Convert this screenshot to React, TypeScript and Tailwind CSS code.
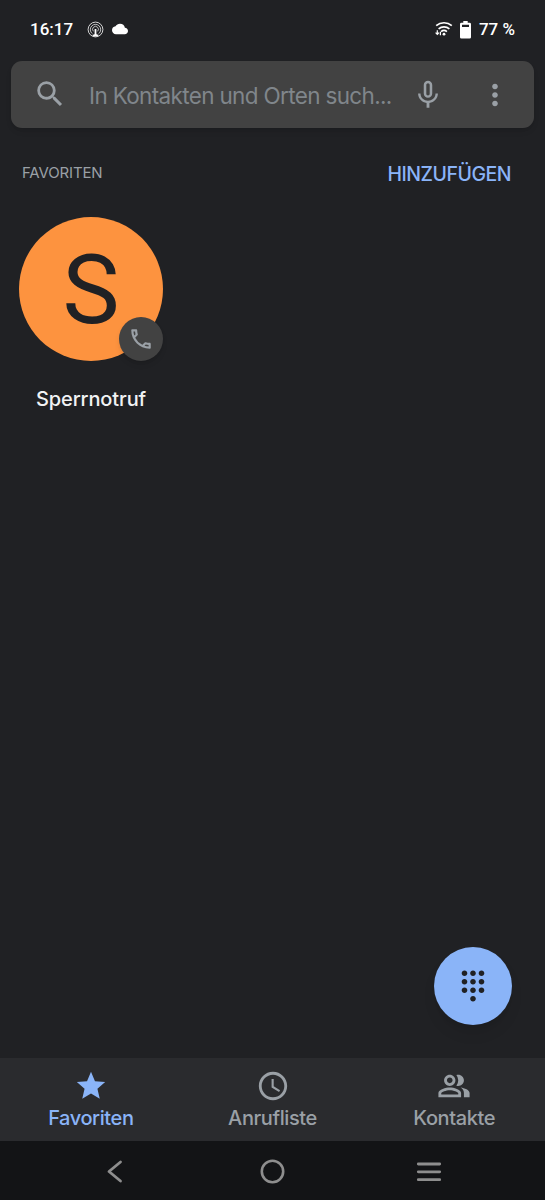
import type { ReactNode } from 'react'
import {
  MdAccessTime,
  MdCloud,
  MdDialpad,
  MdMicNone,
  MdMoreVert,
  MdOutlineCall,
  MdOutlinePeopleAlt,
  MdSearch,
  MdStar,
} from 'react-icons/md'
import clsx from 'clsx'

const HotspotIcon = () => (
  <svg width="17" height="17" viewBox="0 0 17 17" fill="none" stroke="currentColor">
    <circle cx="8.5" cy="8.5" r="7.4" strokeWidth="0.8" />
    <path d="M5.2 12.6A5.2 5.2 0 1 1 11.8 12.6" strokeWidth="0.7" />
    <path d="M6.4 10.3A2.9 2.9 0 1 1 10.6 10.3" strokeWidth="0.7" />
    <path d="M7.6 8h1.8v5.3l2.6.7q-3.5 3-7 0l2.6-.7z" fill="currentColor" stroke="none" />
  </svg>
)

const WifiIcon = () => (
  <svg width="18" height="16" viewBox="0 0 18 16" fill="none" stroke="currentColor" strokeWidth="1.7">
    <path d="M1.2 4.6C5.6.8 12.4.8 16.8 4.6" />
    <path d="M3.6 7.8C6.7 5.2 11.3 5.2 14.4 7.8" />
    <path d="M6.1 10.6C7.8 9.2 10.2 9.2 11.9 10.6" />
    <circle cx="9" cy="13.2" r="1.4" fill="currentColor" stroke="none" />
    <path d="M2.3 9.3v4M.6 11.6l1.7 1.8L4 11.6M5.4 14.2v-3.4" strokeWidth="1.2" />
  </svg>
)

const BatteryIcon = () => (
  <svg width="11" height="18" viewBox="0 0 11 18" fill="currentColor">
    <path
      fillRule="evenodd"
      d="M3.3 0h4.4v1.8h1.9Q11 1.8 11 3.2v13q0 1.4-1.4 1.4H1.4Q0 17.6 0 16.2v-13Q0 1.8 1.4 1.8h1.9zM2 3.7v2.3h7V3.7z"
    />
  </svg>
)

const StatusBar = () => (
  <div className="flex h-[61px] shrink-0 items-center px-[30px] pb-[2px] font-[Roboto,sans-serif] text-[17px] font-medium text-white">
    <span className="w-[43px] whitespace-nowrap">16:17</span>
    <div className="ml-[14px] flex items-center gap-[8px]">
      <HotspotIcon />
      <MdCloud size={16} className="-mt-[2px]" />
    </div>
    <div className="ml-auto flex items-center">
      <span className="-mt-px">
        <WifiIcon />
      </span>
      <span className="ml-[7px]">
        <BatteryIcon />
      </span>
      <span className="ml-[8px] whitespace-nowrap">77 %</span>
    </div>
  </div>
)

const SearchBar = () => (
  <div className="mx-[11px] flex h-[66.5px] shrink-0 items-center rounded-[11px] bg-[#424242] text-[#9aa0a6] shadow-md">
    <MdSearch size={34} className="ml-[22px] shrink-0" />
    <span className="ml-[22px] w-[317px] whitespace-nowrap pt-[3px] text-[22.5px] tracking-[-0.66px] text-[#80868b]">
      In Kontakten und Orten such...
    </span>
    <MdMicNone size={34} className="ml-[5px] mt-px shrink-0" />
    <MdMoreVert size={34} className="ml-auto mr-[22px] mt-px shrink-0" />
  </div>
)

interface IFavoriteProps {
  name: string
}

const Favorite = ({ name }: IFavoriteProps) => (
  <div className="flex w-[182px] flex-col items-center">
    <div className="relative flex size-[144px] items-center justify-center rounded-full bg-[#fd933f]">
      <span className="pt-[2px] font-[Roboto,sans-serif] text-[96px] leading-none text-[#202124]">
        {name.charAt(0)}
      </span>
      <span className="absolute bottom-0 right-0 flex size-[44px] items-center justify-center rounded-full bg-[#424242] text-[#9aa0a6] shadow-md">
        <MdOutlineCall size={26} />
      </span>
    </div>
    <span className="mt-[23px] text-[20px] font-medium leading-[30px] tracking-[-0.1px] text-[#f1f3f4]">
      {name}
    </span>
  </div>
)

interface ITabProps {
  icon: ReactNode
  label: string
  active?: boolean
}

const Tab = ({ icon, label, active }: ITabProps) => (
  <button
    className={clsx(
      'flex flex-1 flex-col items-center pt-[11px]',
      active ? 'text-[#8ab4f8]' : 'text-[#9aa0a6]',
    )}
  >
    {icon}
    <span className="text-[20px] font-medium leading-[30px] tracking-[-0.4px]">{label}</span>
  </button>
)

const SystemNav = () => (
  <div className="flex h-[59px] shrink-0 items-center bg-[#131416] pl-[107px] text-[#8e8e8e]">
    <svg width="16" height="24" viewBox="0 0 16 24" fill="none" stroke="currentColor" strokeWidth="2.8" strokeLinecap="round" strokeLinejoin="round">
      <path d="M13.5 3 2 12.5 13.5 22" />
    </svg>
    <svg width="26" height="26" viewBox="0 0 26 26" fill="none" stroke="currentColor" strokeWidth="2.6" className="ml-[137px]">
      <circle cx="12.5" cy="13.5" r="10.7" />
    </svg>
    <svg width="26" height="24" viewBox="0 0 26 24" stroke="currentColor" strokeWidth="2.8" strokeLinecap="round" className="ml-[130px]">
      <path d="M2.300 5h21.400M2.300 12.800h21.400M2.300 20.700h21.400" />
    </svg>
  </div>
)

export default function App() {
  return (
    <div className="flex h-[1200px] w-[545px] flex-col overflow-hidden bg-[#202124] font-[Inter,sans-serif]">
      <StatusBar />
      <SearchBar />

      <main className="relative flex-1">
        <div className="flex h-[89px] items-center justify-between pl-[22px] pr-[34px] pt-[3px]">
          <h2 className="text-[15px] tracking-[-0.15px] text-[#9aa0a6]">FAVORITEN</h2>
          <button className="pt-[2px] text-[19.5px] font-medium tracking-[-0.5px] text-[#8ab4f8]">
            HINZUFÜGEN
          </button>
        </div>
        <Favorite name="Sperrnotruf" />

        <button className="absolute bottom-[33px] right-[33px] flex size-[78px] items-center justify-center rounded-full bg-[#8ab4f8] text-[#202124] shadow-lg">
          <MdDialpad size={34} />
        </button>
      </main>

      <nav className="flex h-[83px] shrink-0 bg-[#2a2b2e]">
        <Tab icon={<MdStar size={34} />} label="Favoriten" active />
        <Tab icon={<MdAccessTime size={34} />} label="Anrufliste" />
        <Tab icon={<MdOutlinePeopleAlt size={34} />} label="Kontakte" />
      </nav>
      <SystemNav />
    </div>
  )
}
